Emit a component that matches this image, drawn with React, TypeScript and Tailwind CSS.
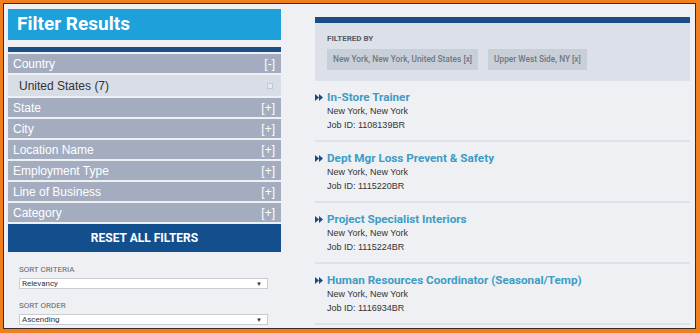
import React from "react";

const din = { fontFamily: "Roboto, 'Open Sans', sans-serif" } as React.CSSProperties;
const arial = { fontFamily: "'Liberation Sans', Arial, sans-serif" } as React.CSSProperties;

const filters = ["State", "City", "Location Name", "Employment Type", "Line of Business", "Category"];

const jobs = [
  { title: "In-Store Trainer", id: "1108139BR" },
  { title: "Dept Mgr Loss Prevent & Safety", id: "1115220BR" },
  { title: "Project Specialist Interiors", id: "1115224BR" },
  { title: "Human Resources Coordinator (Seasonal/Temp)", id: "1116934BR" },
];

function Arrow() {
  return (
    <svg width="8" height="7" viewBox="0 0 8 7" className="shrink-0">
      <polygon points="0,0 4,3.5 0,7" fill="#1c4a7a" />
      <polygon points="4,0 8,3.5 4,7" fill="#1c4a7a" />
    </svg>
  );
}

function Row({ label, sign }: { label: string; sign: string }) {
  return (
    <div className="h-[19px] bg-[#a3adbf] flex items-center justify-between pl-[5px] pr-[6px] text-white text-[12px]" style={arial}>
      <span>{label}</span>
      <span>{sign}</span>
    </div>
  );
}

function Select({ value }: { value: string }) {
  return (
    <div className="h-[11px] w-[249px] bg-white border border-[#c9ccd2] flex items-center justify-between pl-[2px] pr-[5px] text-[8px] text-[#333]" style={din}>
      <span>{value}</span>
      <span className="text-[6px]">▼</span>
    </div>
  );
}

export default function App() {
  return (
    <div className="w-[700px] h-[333px] bg-[#f07f1f] pt-[3px] pl-[3px] pr-[4px] pb-[4px]">
      <div className="w-full h-full border border-[#3b2b28] bg-[#eef0f4] flex pl-[4px] pt-[4px] pr-[4px]">
        <div className="w-[273px] flex flex-col pt-[1px]">
          <div className="h-[31px] bg-[#1ea0da] flex items-center pl-[9px] text-white text-[19px] font-bold" style={din}>
            Filter Results
          </div>
          <div className="h-[5px] bg-[#1a4e84] mt-[7px]" />
          <div className="flex flex-col gap-[2px] mt-[2px]">
            <Row label="Country" sign="[-]" />
            <div className="h-[21px] bg-[#d9dde5] flex items-center justify-between pl-[11px] pr-[8px] text-[#333] text-[12px]" style={arial}>
              <span>United States (7)</span>
              <span className="w-[6px] h-[6px] border border-[#c4c8d0] bg-[#e6e9ee]" />
            </div>
            {filters.map((f) => (
              <Row key={f} label={f} sign="[+]" />
            ))}
            <div className="h-[28px] bg-[#134f8d] flex items-center justify-center text-white text-[12px] font-bold" style={din}>
              RESET ALL FILTERS
            </div>
          </div>
          <div className="pl-[11px] mt-[13px] flex flex-col">
            <div className="text-[8px] text-[#666] leading-[10px]" style={din}>SORT CRITERIA</div>
            <div className="mt-[3px]"><Select value="Relevancy" /></div>
            <div className="text-[8px] text-[#666] leading-[10px] mt-[12px]" style={din}>SORT ORDER</div>
            <div className="mt-[3px]"><Select value="Ascending" /></div>
          </div>
        </div>
        <div className="ml-[34px] w-[375px] flex flex-col pt-[9px]">
          <div className="h-[6px] bg-[#1a4e84]" />
          <div className="h-[58px] bg-[#dce1e9] pl-[12px] pt-[11px]">
            <div className="text-[8px] font-bold text-[#555b66] leading-[10px]" style={din}>FILTERED BY</div>
            <div className="flex gap-[10px] mt-[5px]">
              <div className="h-[21px] bg-[#c9cfd9] flex items-center px-[6px] text-[8.3px] text-[#717782] font-medium" style={din}>New York, New York, United States [x]</div>
              <div className="h-[21px] bg-[#c9cfd9] flex items-center px-[6px] text-[8.3px] text-[#717782] font-medium" style={din}>Upper West Side, NY [x]</div>
            </div>
          </div>
          <div className="flex flex-col">
            {jobs.map((j) => (
              <div key={j.id} className="h-[61px] border-b-[2px] border-[#dde1e8] pt-[9px]">
                <div className="flex items-center gap-[4px]">
                  <Arrow />
                  <span className="text-[11.7px] font-bold text-[#3d9cc4] leading-[14px]" style={din}>{j.title}</span>
                </div>
                <div className="pl-[12px] text-[9px] text-[#333] leading-[14px]" style={arial}>New York, New York</div>
                <div className="pl-[12px] text-[9px] text-[#333] leading-[14px]" style={arial}>Job ID: {j.id}</div>
              </div>
            ))}
          </div>
        </div>
      </div>
    </div>
  );
}
